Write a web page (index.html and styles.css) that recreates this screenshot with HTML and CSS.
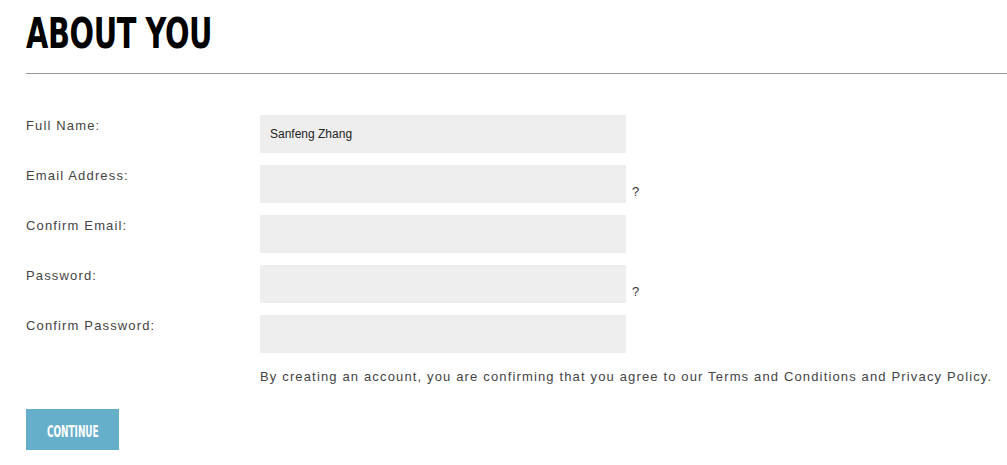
FILE: index.html
```html
<!DOCTYPE html>
<html lang="en">
<head>
  <meta charset="UTF-8">
  <title>About You</title>
  <link rel="stylesheet" href="styles.css">
</head>
<body>
  <h1 class="titulo"><span>ABOUT YOU</span></h1>
  <hr class="divisor">

  <form class="cadastro">
    <div class="linha">
      <label for="nome">Full Name:</label>
      <div class="campo"><input type="text" id="nome" value="Sanfeng Zhang"></div>
    </div>

    <div class="linha">
      <label for="email">Email Address:</label>
      <div class="campo"><input type="email" id="email"><span class="ajuda">?</span></div>
    </div>

    <div class="linha">
      <label for="email2">Confirm Email:</label>
      <div class="campo"><input type="email" id="email2"></div>
    </div>

    <div class="linha">
      <label for="senha">Password:</label>
      <div class="campo"><input type="password" id="senha"><span class="ajuda">?</span></div>
    </div>

    <div class="linha">
      <label for="senha2">Confirm Password:</label>
      <div class="campo"><input type="password" id="senha2"></div>
    </div>

    <p class="termos">By creating an account, you are confirming that you agree to our Terms and Conditions and Privacy Policy.</p>

    <button type="submit" class="continuar"><span>CONTINUE</span></button>
  </form>
</body>
</html>
```

FILE: styles.css
```css
* {
  box-sizing: border-box;
}

body {
  margin: 0;
  padding: 0 0 0 26px;
  font-family: 'Liberation Sans', Arial, sans-serif;
  color: #444;
  background: #fff;
}

.titulo {
  margin: 0;
  padding-top: 10px;
  font-family: 'DejaVu Sans Condensed', 'DejaVu Sans', sans-serif;
  font-weight: 700;
  font-size: 43px;
  line-height: 47px;
  color: #000;
}

.titulo span {
  display: inline-block;
  transform: scaleX(0.745);
  transform-origin: left center;
  letter-spacing: -0.5px;
}

.divisor {
  margin: 16px 0 0;
  border: none;
  border-top: 1px solid #999;
  height: 1px;
  background: #ccc;
}

.cadastro {
  padding-top: 41px;
}

.linha {
  display: grid;
  grid-template-columns: 234px 1fr;
  margin-bottom: 12px;
}

.linha label {
  font-size: 13px;
  letter-spacing: 1.15px;
  padding-top: 3px;
  color: #444;
}

.campo {
  display: flex;
  align-items: flex-end;
}

.campo input {
  width: 366px;
  height: 38px;
  padding: 0 10px;
  border: none;
  background: #eee;
  font-family: 'Liberation Sans', Arial, sans-serif;
  font-size: 12px;
  color: #222;
}

.ajuda {
  margin-left: 6px;
  font-size: 13px;
  line-height: 14px;
  color: #333;
  padding-bottom: 4px;
}

.termos {
  margin: 16px 0 0 234px;
  font-size: 13px;
  letter-spacing: 1.15px;
  color: #444;
}

.continuar {
  margin-top: 25px;
  width: 93px;
  height: 41px;
  padding: 4px 0 0;
  border: none;
  background: #66afca;
  color: #fff;
  font-family: 'DejaVu Sans Condensed', 'DejaVu Sans', sans-serif;
  font-weight: 700;
  font-size: 16px;
  cursor: pointer;
}

.continuar span {
  display: inline-block;
  transform: scaleX(0.62);
}
```
